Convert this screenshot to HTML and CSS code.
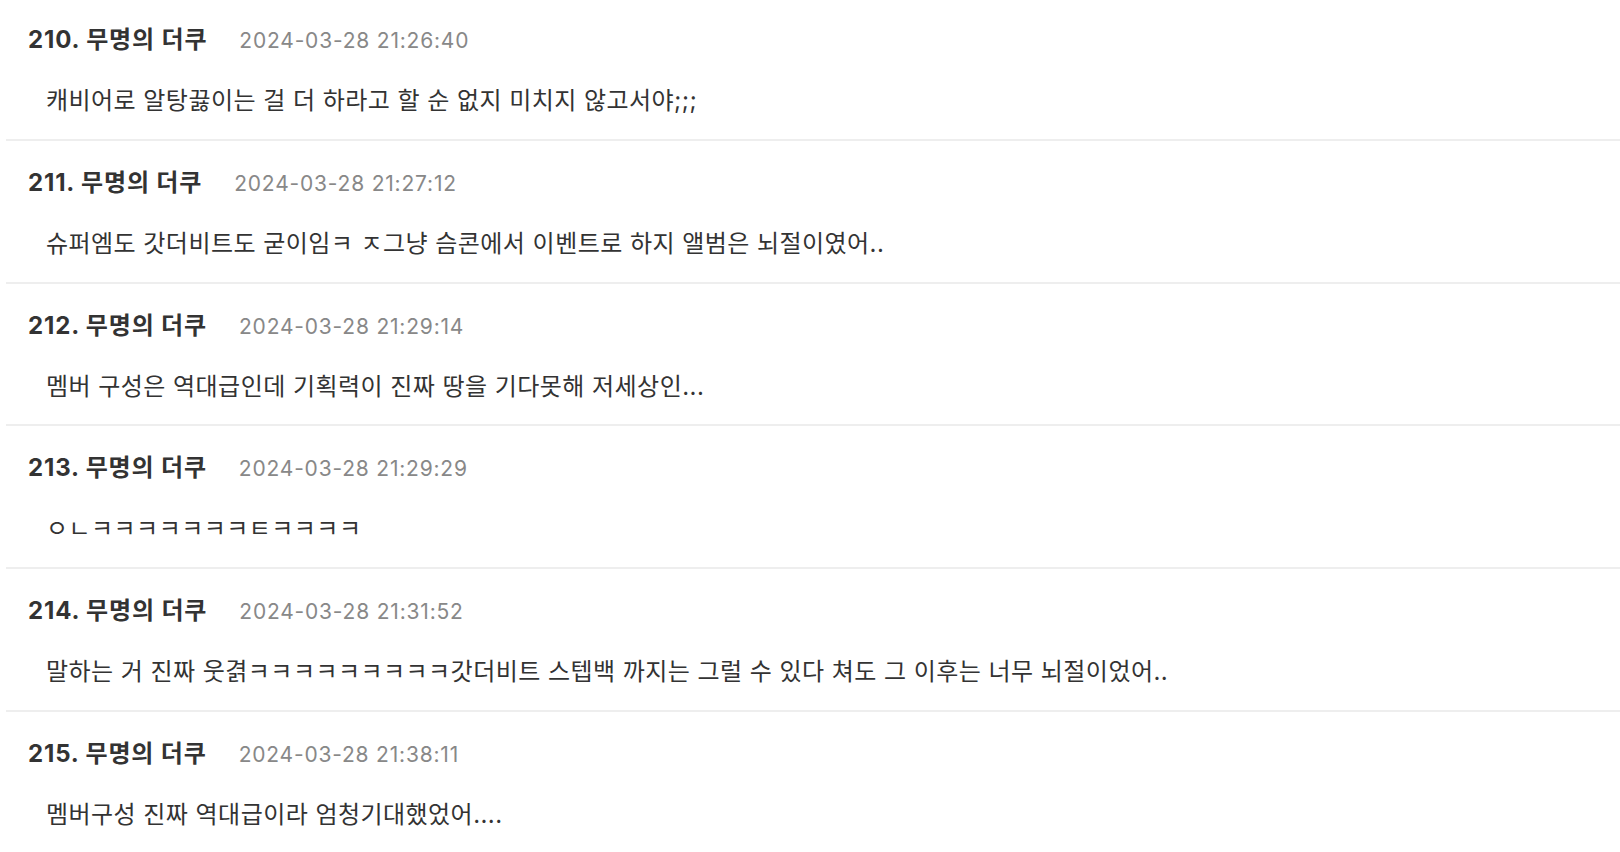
FILE: index.html
```html
<!DOCTYPE html>
<html lang="ko">
<head>
<meta charset="utf-8">
<title>댓글</title>
<link rel="stylesheet" href="styles.css">
</head>
<body>
<ul class="comments">
  <li class="comment">
    <div class="meta"><span class="author">210. 무명의 더쿠</span><span class="date">2024-03-28 21:26:40</span></div>
    <p class="text">캐비어로 알탕끓이는 걸 더 하라고 할 순 없지 미치지 않고서야;;;</p>
  </li>
  <li class="comment">
    <div class="meta"><span class="author">211. 무명의 더쿠</span><span class="date">2024-03-28 21:27:12</span></div>
    <p class="text">슈퍼엠도 갓더비트도 굳이임ㅋ ㅈ그냥 슴콘에서 이벤트로 하지 앨범은 뇌절이였어..</p>
  </li>
  <li class="comment">
    <div class="meta"><span class="author">212. 무명의 더쿠</span><span class="date">2024-03-28 21:29:14</span></div>
    <p class="text">멤버 구성은 역대급인데 기획력이 진짜 땅을 기다못해 저세상인...</p>
  </li>
  <li class="comment">
    <div class="meta"><span class="author">213. 무명의 더쿠</span><span class="date">2024-03-28 21:29:29</span></div>
    <p class="text">ㅇㄴㅋㅋㅋㅋㅋㅋㅋㅌㅋㅋㅋㅋ</p>
  </li>
  <li class="comment">
    <div class="meta"><span class="author">214. 무명의 더쿠</span><span class="date">2024-03-28 21:31:52</span></div>
    <p class="text">말하는 거 진짜 웃겱ㅋㅋㅋㅋㅋㅋㅋㅋㅋ갓더비트 스텝백 까지는 그럴 수 있다 쳐도 그 이후는 너무 뇌절이었어..</p>
  </li>
  <li class="comment">
    <div class="meta"><span class="author">215. 무명의 더쿠</span><span class="date">2024-03-28 21:38:11</span></div>
    <p class="text">멤버구성 진짜 역대급이라 엄청기대했었어....</p>
  </li>
</ul>
</body>
</html>
```

FILE: styles.css
```css
html, body {
  margin: 0;
  padding: 0;
  background: #ffffff;
}

body {
  font-family: Inter, "Noto Sans CJK KR", sans-serif;
  color: #333333;
}

.comments {
  list-style: none;
  margin: -2px 0 0 6px;
  padding: 0;
}

.comment {
  padding: 27px 0 22.8px 22px;
  border-bottom: 2px solid #eeeeee;
}

.meta {
  display: flex;
  align-items: baseline;
  height: 30px;
  line-height: 30px;
}

.author {
  font-size: 24px;
  font-weight: 700;
  color: #333333;
  letter-spacing: 0.85px;
}

.date {
  margin-left: 32px;
  font-size: 21px;
  letter-spacing: 0.8px;
  color: #888888;
}

.text {
  margin: 31px 0 0 18px;
  font-size: 24px;
  letter-spacing: 0.45px;
  line-height: 30px;
  height: 30px;
  color: #333333;
}
```
